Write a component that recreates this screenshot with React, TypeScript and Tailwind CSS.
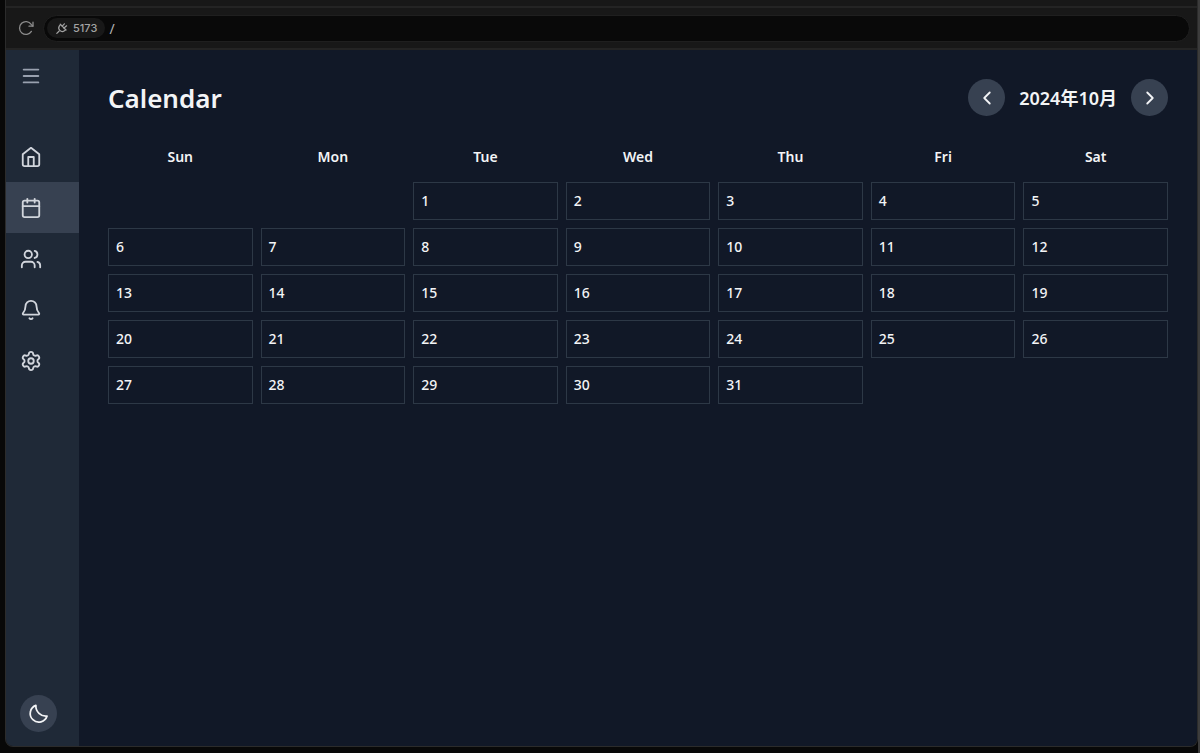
import { useState } from 'react'
import {
  Bell,
  Calendar as CalendarIcon,
  ChevronLeft,
  ChevronRight,
  Menu,
  Settings,
  Users,
} from 'lucide-react'
import { FiHome } from 'react-icons/fi'

const weekdays = ['Sun', 'Mon', 'Tue', 'Wed', 'Thu', 'Fri', 'Sat']

const navItems = [
  { label: 'Home', icon: FiHome },
  { label: 'Calendar', icon: CalendarIcon },
  { label: 'Users', icon: Users },
  { label: 'Notifications', icon: Bell },
  { label: 'Settings', icon: Settings },
]

// Split a month into weeks, null for the blank days on either side
function getWeeks(year: number, month: number) {
  const firstDay = new Date(year, month, 1).getDay()
  const daysInMonth = new Date(year, month + 1, 0).getDate()
  const weeks: (number | null)[][] = []
  for (let start = 1 - firstDay; start <= daysInMonth; start += 7) {
    weeks.push(
      weekdays.map((_, i) => {
        const day = start + i
        return day >= 1 && day <= daysInMonth ? day : null
      })
    )
  }
  return weeks
}

function ReloadIcon() {
  return (
    <svg
      viewBox="0 0 16 16"
      className="h-4 w-4"
      fill="none"
      stroke="currentColor"
      strokeWidth="1.3"
      strokeLinecap="round"
      strokeLinejoin="round"
    >
      <path d="M13.4 11.4A6.4 6.4 0 1 1 13.2 4.4L14.8 6" />
      <path d="M15 2.2V6.2H11" />
    </svg>
  )
}

function PlugIcon() {
  return (
    <svg
      viewBox="0 0 14 14"
      className="h-[14px] w-[14px]"
      fill="none"
      stroke="currentColor"
      strokeWidth="1.2"
      strokeLinecap="round"
      strokeLinejoin="round"
    >
      <path d="M5.2 3.2L11 9" />
      <path d="M5.6 3.6L4.4 4.8A3.6 3.6 0 0 0 9.4 9.8L10.6 8.6" />
      <path d="M7.2 5.2L9.4 2.8M9 7L11.6 4.8" />
      <path d="M4.2 10L1.8 12.4" />
    </svg>
  )
}

function MoonIcon() {
  return (
    <svg
      viewBox="0 0 24 24"
      className="h-[22px] w-[22px]"
      fill="none"
      stroke="currentColor"
      strokeWidth="1.9"
      strokeLinecap="round"
      strokeLinejoin="round"
    >
      <path d="M8.6 2.6A11 11 0 0 0 20.8 14.2 9.4 9.4 0 1 1 8.6 2.6Z" />
    </svg>
  )
}

function AddressBar() {
  return (
    <div className="flex h-11 items-center gap-2 border-y-2 border-[#242424] bg-[#181818] pr-[7px] pl-[11px]">
      <button type="button" title="Reload" className="p-px text-[#8c8c8c]">
        <ReloadIcon />
      </button>
      <div className="flex h-[27px] flex-1 items-center gap-1 rounded-full border border-[#1f1f1f] bg-[#090909] pl-[3px]">
        <button
          type="button"
          className="flex h-5 items-center gap-1 rounded-full bg-[#181818] px-2 font-['Inter','Noto_Sans',sans-serif] text-[11px] font-medium text-[#a3a3a3]"
        >
          <PlugIcon />
          5173
        </button>
        <input
          type="text"
          aria-label="Path"
          defaultValue="/"
          className="min-w-0 flex-1 bg-transparent text-[14px] text-[#b5b5b5] outline-none"
        />
      </div>
    </div>
  )
}

function Sidebar() {
  return (
    <aside className="flex w-[73px] shrink-0 flex-col bg-[#1f2937] text-gray-300">
      <button type="button" title="Menu" className="px-[14px] py-[15px] text-gray-400">
        <Menu className="h-[22px] w-[22px]" />
      </button>
      <nav className="mt-[29px] flex-1">
        {navItems.map(({ label, icon: Icon }) => (
          <a
            key={label}
            href="#"
            title={label}
            className={`flex h-[51px] items-center px-[14px] ${
              label === 'Calendar' ? 'bg-[#374151]' : 'hover:bg-gray-700'
            }`}
          >
            <Icon className="h-[22px] w-[22px]" />
          </a>
        ))}
      </nav>
      <div className="p-[14px]">
        <button
          type="button"
          title="Dark mode"
          className="flex h-[37px] w-[37px] items-center justify-center rounded-full bg-[#374151] text-gray-100"
        >
          <MoonIcon />
        </button>
      </div>
    </aside>
  )
}

function Calendar() {
  const [current, setCurrent] = useState({ year: 2024, month: 9 })

  const changeMonth = (delta: number) => {
    const next = new Date(current.year, current.month + delta, 1)
    setCurrent({ year: next.getFullYear(), month: next.getMonth() })
  }

  return (
    <main className="min-w-0 flex-1 bg-[#111827] p-[29px] text-gray-100">
      <div className="mb-[14px] flex h-[37px] items-center justify-between">
        <h1 className="pt-[2px] text-[26px] font-semibold">Calendar</h1>
        <div className="flex items-center gap-[14px]">
          <button
            type="button"
            title="Previous month"
            onClick={() => changeMonth(-1)}
            className="flex h-[37px] w-[37px] items-center justify-center rounded-full bg-[#374151]"
          >
            <ChevronLeft className="h-[22px] w-[22px]" />
          </button>
          <h2 className="pt-[2px] text-[18px] font-semibold">
            {current.year}年{current.month + 1}月
          </h2>
          <button
            type="button"
            title="Next month"
            onClick={() => changeMonth(1)}
            className="flex h-[37px] w-[37px] items-center justify-center rounded-full bg-[#374151]"
          >
            <ChevronRight className="h-[22px] w-[22px]" />
          </button>
        </div>
      </div>

      <div className="-mx-2">
        <table className="w-full table-fixed border-separate border-spacing-2 text-[14px] leading-5">
          <thead>
            <tr>
              {weekdays.map((day) => (
                <th key={day} scope="col" className="h-9 pt-[2px] font-semibold">
                  {day}
                </th>
              ))}
            </tr>
          </thead>
          <tbody>
            {getWeeks(current.year, current.month).map((week, i) => (
              <tr key={i}>
                {week.map((day, j) =>
                  day ? (
                    <td key={j} className="h-[38px] border border-[#2d3846] px-[7px] font-medium">
                      {day}
                    </td>
                  ) : (
                    <td key={j} />
                  )
                )}
              </tr>
            ))}
          </tbody>
        </table>
      </div>
    </main>
  )
}

export default function App() {
  return (
    <div className="flex min-h-screen flex-col border-r-2 border-[#3c3c3c] bg-[#080808] pb-[6px] pl-[5px] font-['Noto_Sans','Noto_Sans_CJK_JP',sans-serif]">
      <div className="flex flex-1 flex-col overflow-hidden rounded-b-lg border-x border-b border-[#2b2b2b] bg-[#181818] pt-[6px]">
        <AddressBar />
        <div className="flex flex-1">
          <Sidebar />
          <Calendar />
        </div>
      </div>
    </div>
  )
}
